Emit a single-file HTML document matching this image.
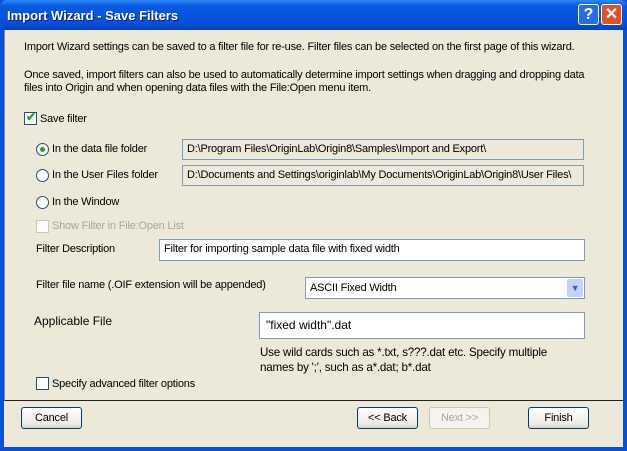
<!DOCTYPE html>
<html><head><style>
*{margin:0;padding:0;box-sizing:border-box}
body{width:627px;height:451px;background:#0A4FD8;font-family:"Liberation Sans",sans-serif;font-size:11px;letter-spacing:-0.2px;color:#000;position:relative;overflow:hidden}
.title{position:absolute;left:0;top:0;width:627px;height:30px;background:linear-gradient(#2D8BF7,#0859E0 20%,#0553DD 70%,#0441C0);border-radius:7px 7px 0 0}
.title span{position:absolute;left:7px;top:8px;color:#fff;font-weight:bold;font-size:13px;letter-spacing:0;text-shadow:1px 1px #0a1f7a}
.tb{position:absolute;top:4px;width:21px;height:21px;border:1px solid #fff;border-radius:3px;color:#fff;font-weight:bold;font-size:16px;text-align:center;line-height:19px;letter-spacing:0}
.win{position:absolute;left:4px;top:30px;width:619px;height:417px;background:#ECE9D8}
.panel{position:absolute;left:0;top:0;width:619px;height:371px;border-bottom:1px solid #222;border-left:1px solid #888}
.a{position:absolute;white-space:nowrap}
.cb{position:absolute;width:13px;height:13px;border:1px solid #1C5180;background:#fff}
.rb{position:absolute;width:13px;height:13px;border:1px solid #1C5180;border-radius:50%;background:#fff}
.in{position:absolute;border:1px solid #7F9DB9;background:#fff;padding:3px 4px;white-space:nowrap;overflow:hidden}
.btn{position:absolute;height:22px;width:61px;border:1px solid #003C74;border-radius:3px;background:linear-gradient(#fff,#ECEBE6 80%,#D6D0C5);text-align:center;line-height:20px}
</style></head><body>
<div class="title"><span>Import Wizard - Save Filters</span>
<div class="tb" style="left:578px;background:#2A6BEA">?</div>
<div class="tb" style="left:601px;background:#E0502A">✕</div></div>
<div class="win">
<div class="panel"></div>
<div class="a" style="left:20px;top:11px">Import Wizard settings can be saved to a filter file for re-use. Filter files can be selected on the first page of this wizard.</div>
<div class="a" style="left:20px;top:39px">Once saved, import filters can also be used to automatically determine import settings when dragging and dropping data</div>
<div class="a" style="left:20px;top:52px">files into Origin and when opening data files with the File:Open menu item.</div>
<div class="cb" style="left:20px;top:82px"><span style="position:absolute;left:1px;top:-3px;color:#21A121;font-size:12px;font-weight:bold">✔</span></div>
<div class="a" style="left:36px;top:83px">Save filter</div>
<div class="rb" style="left:32px;top:113px"><div style="position:absolute;left:3px;top:3px;width:5px;height:5px;border-radius:50%;background:#21A121"></div></div>
<div class="a" style="left:48px;top:113px">In the data file folder</div>
<div class="in" style="left:178px;top:109px;width:402px;height:21px;background:#ECE9D8">D:\Program Files\OriginLab\Origin8\Samples\Import and Export\</div>
<div class="rb" style="left:32px;top:139px"></div>
<div class="a" style="left:48px;top:139px">In the User Files folder</div>
<div class="in" style="left:178px;top:135px;width:402px;height:21px;background:#ECE9D8">D:\Documents and Settings\originlab\My Documents\OriginLab\Origin8\User Files\</div>
<div class="rb" style="left:32px;top:166px"></div>
<div class="a" style="left:48px;top:166px">In the Window</div>
<div class="cb" style="left:32px;top:190px;border-color:#CAC8BB"></div>
<div class="a" style="left:48px;top:190px;color:#ACA899">Show Filter in File:Open List</div>
<div class="a" style="left:32px;top:213px">Filter Description</div>
<div class="in" style="left:155px;top:209px;width:426px;height:22px">Filter for importing sample data file with fixed width</div>
<div class="a" style="left:32px;top:249px">Filter file name (.OIF extension will be appended)</div>
<div class="in" style="left:301px;top:247px;width:280px;height:22px;padding-top:4px">ASCII Fixed Width<div style="position:absolute;right:1px;top:1px;width:16px;height:18px;background:#C1D3FB;border-radius:2px;color:#4D6185;font-size:9px;text-align:center;line-height:18px">▼</div></div>
<div class="a" style="left:30px;top:284px;font-size:12px;letter-spacing:0">Applicable File</div>
<div class="in" style="left:255px;top:282px;width:326px;height:27px;font-size:12px;padding:5px 6px;letter-spacing:0">"fixed width".dat</div>
<div class="a" style="left:256px;top:316px;font-size:11.6px">Use wild cards such as *.txt, s???.dat etc. Specify multiple</div>
<div class="a" style="left:256px;top:331px;font-size:11.6px">names by ';', such as a*.dat; b*.dat</div>
<div class="cb" style="left:32px;top:347px"></div>
<div class="a" style="left:48px;top:348px">Specify advanced filter options</div>
<div class="btn" style="left:17px;top:377px">Cancel</div>
<div class="btn" style="left:353px;top:377px">&lt;&lt; Back</div>
<div class="btn" style="left:425px;top:377px;border-color:#C9C7BA;color:#ACA899;background:#F4F3EE">Next &gt;&gt;</div>
<div class="btn" style="left:524px;top:377px">Finish</div>
</div>
</body></html>
